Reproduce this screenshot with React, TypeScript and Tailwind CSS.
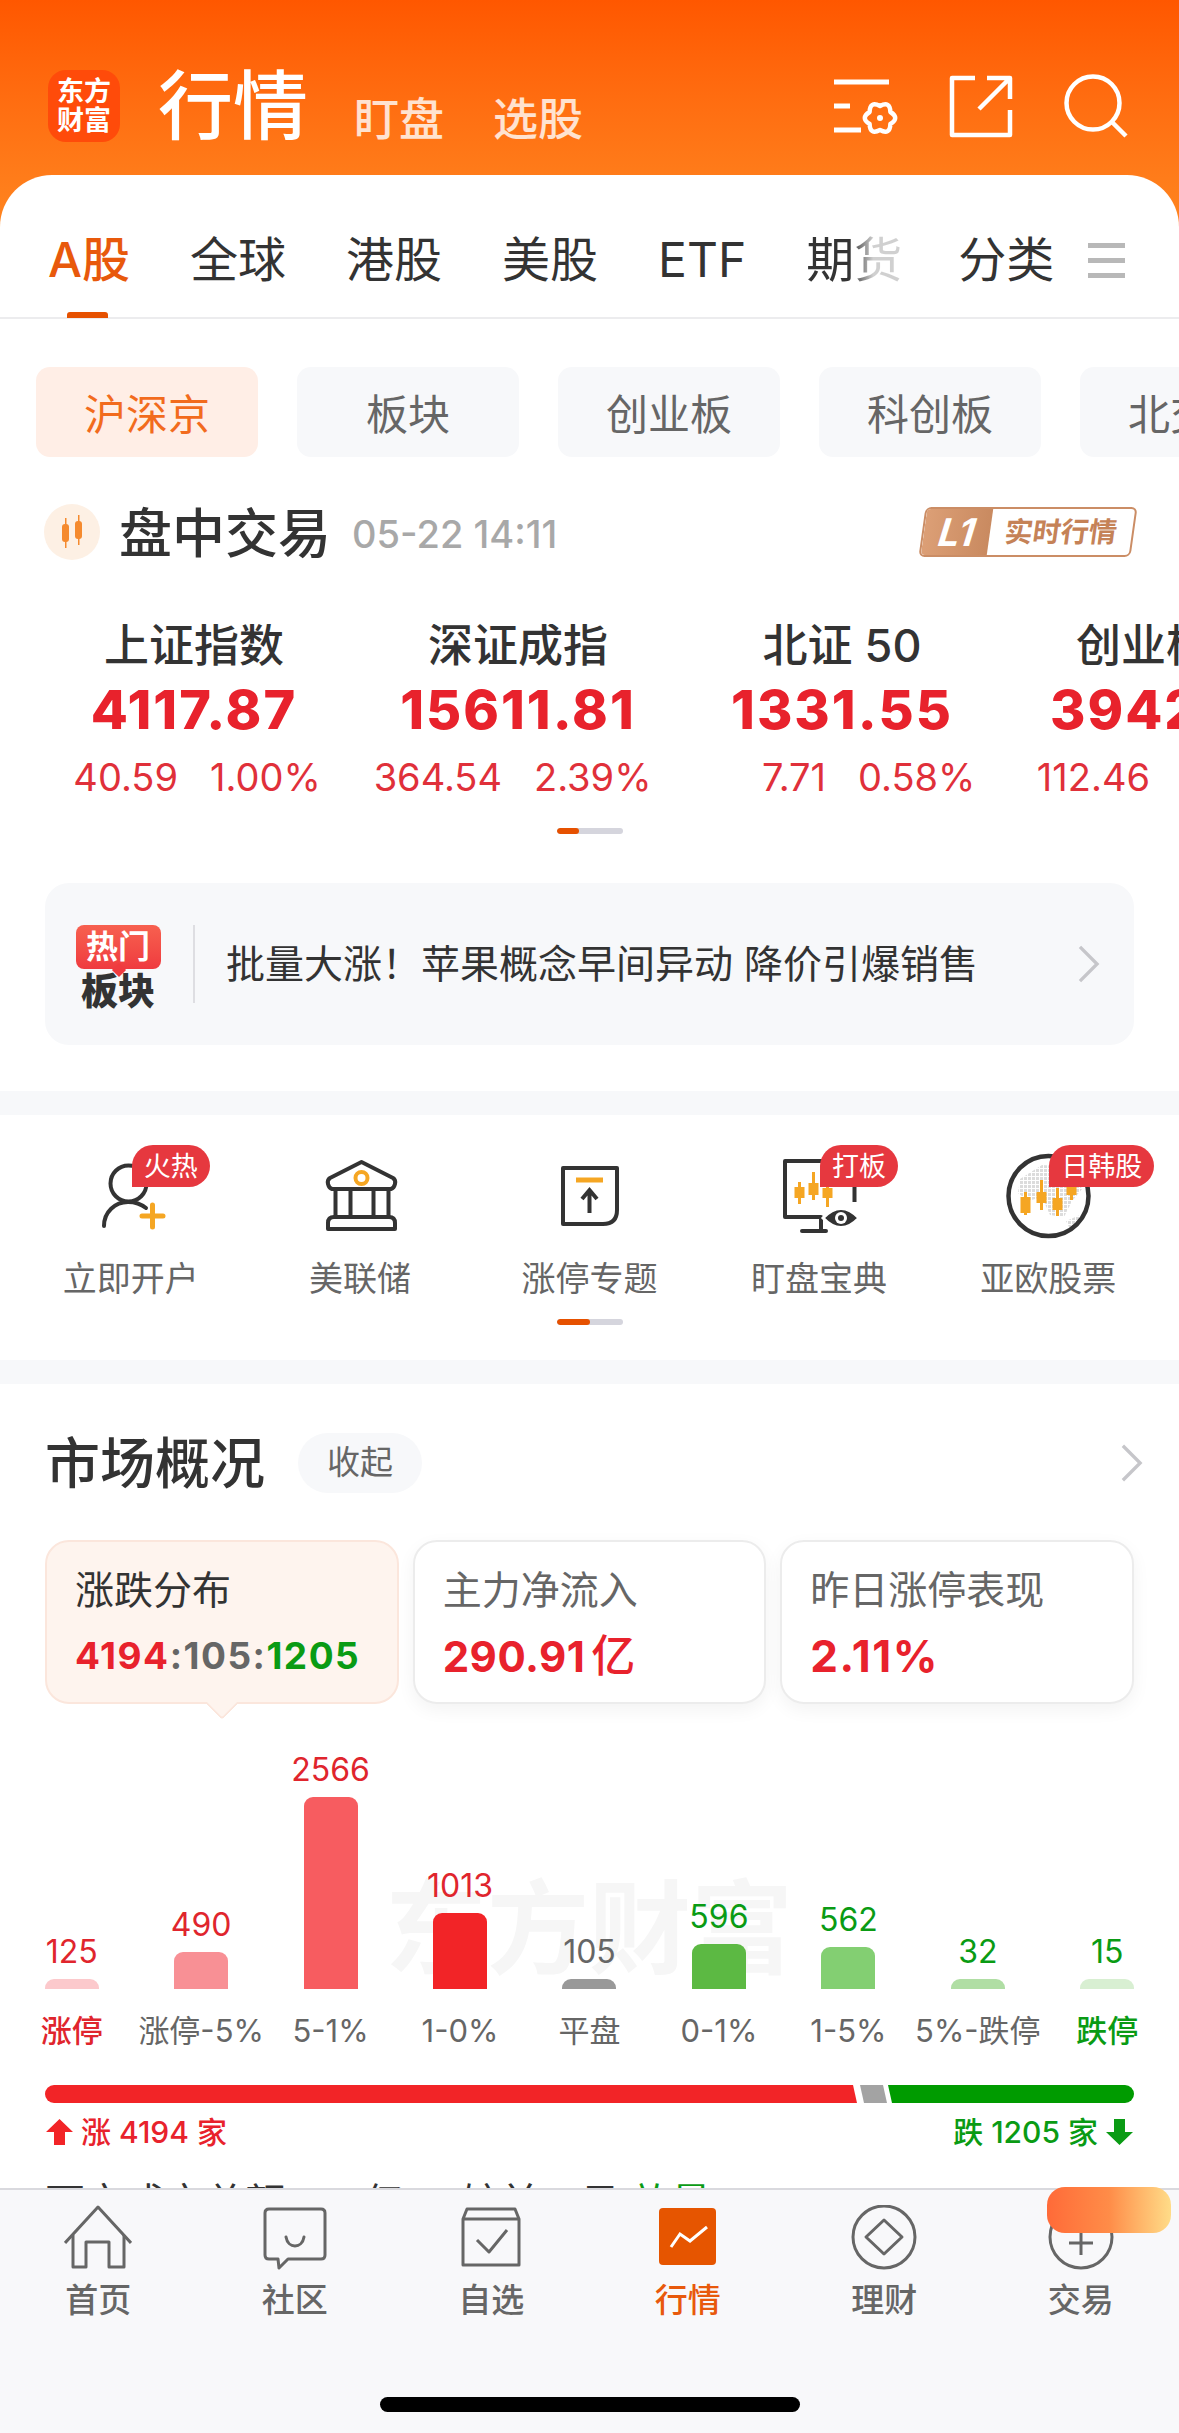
const mainTabs = ["全球", "港股", "美股", "ETF"];
const subTabs = ["板块", "创业板", "科创板", "北交所"];

const indexes = [
  { name: "上证指数", value: "4117.87", change: "40.59", pct: "1.00%" },
  { name: "深证成指", value: "15611.81", change: "364.54", pct: "2.39%" },
  { name: "北证 50", value: "1331.55", change: "7.71", pct: "0.58%" },
  { name: "创业板指", value: "3942.10", change: "112.46", pct: "2.93%" },
];

const summaryCards = [
  { title: "主力净流入", value: "290.91", unit: "亿", size: "text-[42px] tracking-[0.5px]" },
  { title: "昨日涨停表现", value: "2.11%", unit: "", size: "text-[44px] tracking-[1.5px]" },
];

const bars = [
  { value: "125", label: "涨停", h: "h-[10px]", bar: "bg-[#fcc9cc]", text: "text-[#e0252d]", labelText: "text-[#e0252d] font-medium" },
  { value: "490", label: "涨停-5%", h: "h-[37px]", bar: "bg-[#f89095]", text: "text-[#e0252d]", labelText: "text-[#666]" },
  { value: "2566", label: "5-1%", h: "h-[192px]", bar: "bg-[#f75c60]", text: "text-[#e0252d]", labelText: "text-[#666]" },
  { value: "1013", label: "1-0%", h: "h-[76px]", bar: "bg-[#f22427]", text: "text-[#e0252d]", labelText: "text-[#666]" },
  { value: "105", label: "平盘", h: "h-[10px]", bar: "bg-[#999999]", text: "text-[#666]", labelText: "text-[#666]" },
  { value: "596", label: "0-1%", h: "h-[45px]", bar: "bg-[#5cb943]", text: "text-[#0a9b14]", labelText: "text-[#666]" },
  { value: "562", label: "1-5%", h: "h-[42px]", bar: "bg-[#83cf72]", text: "text-[#0a9b14]", labelText: "text-[#666]" },
  { value: "32", label: "5%-跌停", h: "h-[10px]", bar: "bg-[#b0dea4]", text: "text-[#0a9b14]", labelText: "text-[#666]" },
  { value: "15", label: "跌停", h: "h-[10px]", bar: "bg-[#d8efd2]", text: "text-[#0a9b14]", labelText: "text-[#0a9b14] font-medium" },
];

function Chevron({ className }: { className: string }) {
  return (
    <svg className={className} viewBox="0 0 24 40" fill="none" stroke="#c6c6ca" strokeWidth="3.5">
      <path d="M3 2l18 18L3 38" />
    </svg>
  );
}

function Candle({ x, wick, body }: { x: number; wick: [number, number]; body: [number, number] }) {
  return (
    <g fill="#f5a623">
      <rect x={x - 1.5} y={wick[0]} width="3" height={wick[1] - wick[0]} />
      <rect x={x - 5} y={body[0]} width="10" height={body[1] - body[0]} />
    </g>
  );
}

function QuickIcon({ kind }: { kind: string }) {
  const dark = { fill: "none", stroke: "#333", strokeWidth: 4 };
  return (
    <svg className="absolute inset-0" width="200" height="96" viewBox="0 0 200 96">
      {kind === "user" && (
        <g>
          <circle cx="97.5" cy="38.5" r="18" {...dark} />
          <path d="M73 81c0-14 11-24 24-24 7 0 13 2 18 6" {...dark} strokeLinecap="round" />
          <path d="M111 71h21M121.500 60v22" stroke="#f5a623" strokeWidth="5" strokeLinecap="round" />
        </g>
      )}
      {kind === "bank" && (
        <g>
          <path d="M101.500 17L133 33q3 2 2 6t-4 5H72q-3-1-4-5t2-6z" {...dark} strokeLinejoin="round" />
          <circle cx="101.500" cy="33" r="6" fill="none" stroke="#f5a623" strokeWidth="4" />
          <path d="M75.500 45v27M90.500 45v27M113.500 45v27M128.500 45v27" {...dark} />
          <path d="M74 72h55q6 0 6 6v6H68v-6q0-6 6-6z" {...dark} strokeLinejoin="round" />
        </g>
      )}
      {kind === "limit" && (
        <g>
          <path d="M74 23h54v42q0 14-14 14H74z" {...dark} strokeLinejoin="round" />
          <path d="M87 35h27" stroke="#f5a623" strokeWidth="5" />
          <path d="M100.500 68V46M93 54l7.500-9 7.500 9" {...dark} />
        </g>
      )}
      {kind === "screen" && (
        <g>
          <path d="M102 72H66V16h40M135.500 40v17" {...dark} strokeLinejoin="round" />
          <path d="M102 72v14M83 86h24" {...dark} strokeLinecap="round" />
          <Candle x={80.5} wick={[37, 59]} body={[42, 53]} />
          <Candle x={94.5} wick={[27, 55]} body={[38, 50]} />
          <Candle x={108.5} wick={[40, 62]} body={[43, 53]} />
          <Candle x={120.5} wick={[30, 40]} body={[30, 36]} />
          <path d="M104 73q18-19 36 0q-18 19-36 0z" fill="#333" stroke="#fff" strokeWidth="3" />
          <circle cx="122" cy="73" r="6" fill="#fff" />
          <circle cx="122" cy="73" r="3" fill="#333" />
        </g>
      )}
      {kind === "globe" && (
        <g>
          <defs>
            <pattern id="land" width="4" height="4" patternUnits="userSpaceOnUse">
              <rect width="3" height="3" fill="#dcdcdc" />
            </pattern>
          </defs>
          <path d="M72 34l22-14 30 2 10 22-10 12-8 16-14-2-8-18-14 4-10-8z" fill="url(#land)" />
          <path d="M118 76l14-6 2 6-12 8z" fill="url(#land)" />
          <circle cx="100.500" cy="51" r="40" fill="none" stroke="#333" strokeWidth="4.500" />
          <Candle x={77.5} wick={[47, 70]} body={[52, 68]} />
          <Candle x={93.5} wick={[35, 65]} body={[47, 58]} />
          <Candle x={109.5} wick={[43, 71]} body={[53, 65]} />
          <Candle x={123.5} wick={[40, 55]} body={[41, 50]} />
        </g>
      )}
    </svg>
  );
}

const quickItems = [
  { kind: "user", label: "立即开户", badge: "火热", badgeW: "w-[78px]" },
  { kind: "bank", label: "美联储", badge: "", badgeW: "" },
  { kind: "limit", label: "涨停专题", badge: "", badgeW: "" },
  { kind: "screen", label: "盯盘宝典", badge: "打板", badgeW: "w-[78px]" },
  { kind: "globe", label: "亚欧股票", badge: "日韩股", badgeW: "w-[105px]" },
];

function NavIcon({ kind }: { kind: string }) {
  const line = { fill: "none", stroke: "#666", strokeWidth: 3 };
  return (
    <svg width="68" height="68" viewBox="0 0 68 68">
      {kind === "home" && (
        <g {...line} strokeLinejoin="round">
          <path d="M1 38L34 2l33 36" />
          <path d="M9 30v32h13V37h23v25h15V30" />
        </g>
      )}
      {kind === "community" && (
        <g {...line} strokeLinejoin="round">
          <path d="M8 4h52q4 0 4 4v42q0 4-4 4H27l-9 9-1-9H8q-4 0-4-4V8q0-4 4-4z" />
          <path d="M25 32c2 12 16 12 18 0" strokeLinecap="round" />
        </g>
      )}
      {kind === "watch" && (
        <g {...line} strokeLinejoin="round">
          <path d="M6 14l4-10h48l4 10v46H6zM6 14h56" />
          <path d="M20 35l12 12 18-22" />
        </g>
      )}
      {kind === "market" && (
        <g>
          <rect x="5" y="3" width="57" height="57" rx="4" fill="#e65500" />
          <path d="M17 42l9-13 10 7 17-14" fill="none" stroke="#fff" strokeWidth="3" />
        </g>
      )}
      {kind === "wealth" && (
        <g {...line}>
          <circle cx="34" cy="32" r="31" />
          <path d="M34 15l18 17-18 17-18-17z" strokeLinejoin="round" />
        </g>
      )}
      {kind === "trade" && (
        <g {...line}>
          <circle cx="34" cy="32" r="31" />
          <path d="M22 38h24M34 26v24" />
        </g>
      )}
    </svg>
  );
}

const navItems = [
  { kind: "home", label: "首页" },
  { kind: "community", label: "社区" },
  { kind: "watch", label: "自选" },
  { kind: "market", label: "行情" },
  { kind: "wealth", label: "理财" },
  { kind: "trade", label: "交易" },
];

export default function App() {
  return (
    <div className="relative flex h-[2433px] w-[1179px] flex-col overflow-hidden bg-white [font-family:Inter,'Noto_Sans_CJK_SC',sans-serif]">
      <div className="min-h-0 flex-1 overflow-hidden">
        {/* orange header */}
        <header className="h-[227px] bg-gradient-to-b from-[#ff5700] to-[#ff851f] pt-[70px]">
          <div className="flex h-[72px] items-center pl-[48px] pr-[51px]">
            <div className="flex h-[72px] w-[72px] flex-col items-center justify-center rounded-[18px] bg-[#ff4b0a] text-[27px] font-bold leading-[29px] text-white">
              <span>东方</span>
              <span>财富</span>
            </div>
            <h1 className="ml-[38px] text-[75px] font-medium leading-[72px] text-white">行情</h1>
            <div className="ml-[46px] flex translate-y-[2px] gap-[49px] self-end text-[45px] font-medium leading-[48px] text-white/80">
              <span>盯盘</span>
              <span>选股</span>
            </div>
            <div className="ml-auto flex items-center gap-[51px]">
              <svg width="64" height="64" viewBox="0 0 64 64" fill="none" stroke="#fff" strokeWidth="5">
                <path d="M0 8h55M0 32h16M0 56h27" />
                <path d="M46 32Q56 26.700 56.400 38Q66 44 56.400 50Q56 61.300 46 56Q36 61.300 35.600 50Q26 44 35.600 38Q36 26.700 46 32z" strokeWidth="4.500" strokeLinejoin="round" />
                <circle cx="46" cy="44" r="3" fill="#fff" stroke="none" />
              </svg>
              <svg width="64" height="64" viewBox="0 0 64 64" fill="none" stroke="#fff" strokeWidth="4.500" strokeLinejoin="round">
                <path d="M26 4H3v57h58V36" />
                <path d="M38 4h23v21M60 5L30 35" />
              </svg>
              <svg width="64" height="64" viewBox="0 0 64 64" fill="none" stroke="#fff" strokeWidth="4.500">
                <circle cx="29" cy="29" r="26.500" />
                <path d="M47 47l15 15" />
              </svg>
            </div>
          </div>
        </header>

        <main className="relative -mt-[52px] rounded-t-[52px] bg-white">
          {/* market tabs */}
          <nav className="flex h-[144px] items-center gap-[60px] border-b-2 border-[#ececee] pl-[48px] pt-[28px] text-[48px] leading-[56px] text-[#333]">
            <div className="relative font-medium text-[#e8590c]">
              A股
              <span className="absolute left-[19px] top-[80px] h-[6px] w-[41px] rounded-t-[3px] bg-[#e65100]" />
            </div>
            {mainTabs.map((t) => (
              <span key={t}>{t}</span>
            ))}
            <span className="bg-gradient-to-r from-[#333] from-45% to-[#d0d0d0] to-70% bg-clip-text text-transparent">期货</span>
            <span className="-ml-[4px]">分类</span>
            <div className="-ml-[26px] flex w-[37px] flex-col gap-[10px]">
              <span className="h-[5px] bg-[#b8b8b8]" />
              <span className="h-[5px] bg-[#b8b8b8]" />
              <span className="h-[5px] bg-[#b8b8b8]" />
            </div>
          </nav>

          {/* sub tabs */}
          <div className="mt-[48px] flex gap-[39px] overflow-hidden pl-[36px] text-[42px]">
            <div className="flex h-[90px] w-[222px] shrink-0 items-center justify-center rounded-[14px] bg-[#ffeee6] pt-[5px] text-[#f26b1d]">沪深京</div>
            {subTabs.map((t) => (
              <div key={t} className="flex h-[90px] w-[222px] shrink-0 items-center justify-center rounded-[14px] bg-[#f7f8fa] pt-[5px] text-[#666]">
                {t}
              </div>
            ))}
          </div>

          {/* session line */}
          <div className="mt-[47px] flex h-[56px] items-center pl-[44px] pr-[45px]">
            <svg width="56" height="56" viewBox="0 0 56 56">
              <circle cx="28" cy="28" r="28" fill="#fdf0e4" />
              <g fill="#f58a2e">
                <rect x="18" y="20" width="7" height="18" rx="3" />
                <rect x="21" y="14" width="1.500" height="30" />
                <rect x="31" y="17" width="7" height="18" rx="3" />
                <rect x="34" y="11" width="1.500" height="30" />
              </g>
            </svg>
            <span className="ml-[19px] translate-y-[2px] text-[53px] font-medium leading-[56px] text-[#333]">盘中交易</span>
            <span className="ml-[21px] translate-y-[2px] text-[38px] font-medium text-[#a8a8a8]">05-22 14:11</span>
            <div className="ml-auto flex h-[50px] w-[212px] -skew-x-[8deg] overflow-hidden rounded-[6px] border-2 border-[#cb8d65]">
              <span className="flex w-[66px] items-center justify-center bg-gradient-to-r from-[#dc9f76] to-[#c98a60] text-[38px] font-bold italic text-white">L1</span>
              <span className="flex flex-1 items-center justify-center text-[28px] font-bold text-[#c58257]">实时行情</span>
            </div>
          </div>

          {/* index quotes */}
          <div className="mt-[64px] flex overflow-hidden pl-[32px]">
            {indexes.map((o) => (
              <div key={o.name} className="w-[324px] shrink-0 text-center">
                <div className="h-[44px] whitespace-nowrap text-[45px] font-medium leading-[44px] text-[#333]">{o.name}</div>
                <div className="mt-[10px] text-[54px] font-extrabold leading-[64px] tracking-[2px] text-[#e8222c]">{o.value}</div>
                <div className="mt-[14px] grid grid-cols-2 gap-[32px] text-[38px] leading-[42px] text-[#e0303a]">
                  <span className="text-right">{o.change}</span>
                  <span className="text-left">{o.pct}</span>
                </div>
              </div>
            ))}
          </div>
          <div className="mx-auto mt-[30px] h-[6px] w-[66px] overflow-hidden rounded-full bg-[#d5d5dd]">
            <div className="h-full w-[22px] rounded-full bg-[#e65100]" />
          </div>

          {/* hot sector banner */}
          <div className="mx-[45px] mt-[49px] flex h-[162px] items-center rounded-[24px] bg-[#f7f8fa] pl-[30px] pr-[34px]">
            <div className="flex w-[86px] translate-y-[3px] flex-col items-center">
              <div className="relative flex h-[44px] w-[85px] items-center justify-center rounded-[8px] bg-gradient-to-b from-[#f7604f] to-[#ef3a3f] text-[32px] font-bold leading-[44px] text-white">
                热门
                <span className="absolute -bottom-[6px] left-[38px] h-[10px] w-[10px] rotate-45 bg-[#ef3a3f]" />
              </div>
              <div className="mt-[5px] text-[37px] font-black leading-[36px] text-[#333]">板块</div>
            </div>
            <div className="ml-[32px] h-[78px] w-[2px] bg-[#dedee2]" />
            <p className="ml-[31px] whitespace-pre text-[39px] text-[#333]">批量大涨！苹果概念早间异动 降价引爆销售</p>
            <Chevron className="ml-auto h-[38px] w-[23px]" />
          </div>

          <div className="mt-[46px] h-[24px] bg-[#f7f8fa]" />

          {/* quick entries */}
          <div className="grid grid-cols-5 px-[16px] pt-[30px]">
            {quickItems.map((o) => (
              <div key={o.label} className="flex flex-col items-center">
                <div className="relative h-[96px] w-[200px]">
                  <QuickIcon kind={o.kind} />
                  {o.badge && (
                    <span className={`absolute left-[101px] top-0 flex h-[42px] items-center justify-center rounded-t-[21px] rounded-br-[21px] bg-[#e6383f] text-[27px] leading-none text-white ${o.badgeW}`}>
                      {o.badge}
                    </span>
                  )}
                </div>
                <span className="mt-[18px] text-[34px] leading-[40px] text-[#666]">{o.label}</span>
              </div>
            ))}
          </div>
          <div className="mx-auto mt-[20px] h-[6px] w-[66px] overflow-hidden rounded-full bg-[#d5d5dd]">
            <div className="h-full w-[33px] rounded-full bg-[#e65100]" />
          </div>

          <div className="mt-[35px] h-[24px] bg-[#f7f8fa]" />

          {/* market overview */}
          <section>
            <div className="mt-[49px] flex h-[60px] items-center pl-[45px] pr-[36px]">
              <h2 className="text-[55px] font-medium leading-[60px] text-[#333]">市场概况</h2>
              <span className="ml-[33px] flex h-[60px] w-[124px] items-center justify-center rounded-full bg-[#f7f8fa] text-[33px] text-[#666]">收起</span>
              <Chevron className="ml-auto h-[40px] w-[23px]" />
            </div>

            <div className="mt-[47px] grid grid-cols-3 gap-[14px] px-[45px]">
              <div className="relative h-[164px] rounded-[24px] border-2 border-[#fbe6dc] bg-[#fef4ee] pl-[28px] pt-[26px]">
                <div className="text-[39px] leading-[44px] text-[#333]">涨跌分布</div>
                <div className="mt-[20px] whitespace-nowrap text-[37px] font-bold leading-[48px] tracking-[1.5px]">
                  <span className="text-[#e8222c]">4194</span>
                  <span className="text-[#666]">:105:</span>
                  <span className="text-[#0a9b14]">1205</span>
                </div>
                <span className="absolute -bottom-[13px] left-[163px] h-[24px] w-[24px] rotate-45 rounded-br-[4px] border-b-2 border-r-2 border-[#fbe6dc] bg-[#fef4ee]" />
              </div>
              {summaryCards.map((o) => (
                <div key={o.title} className="h-[164px] rounded-[24px] border-2 border-[#ececec] bg-white pl-[28px] pt-[26px] shadow-[0_6px_18px_rgba(0,0,0,0.05)]">
                  <div className="text-[39px] leading-[44px] text-[#666]">{o.title}</div>
                  <div className={`mt-[20px] font-bold leading-[48px] text-[#e8222c] ${o.size}`}>
                    {o.value}
                    {o.unit && <span className="ml-[6px] text-[44px] font-medium">{o.unit}</span>}
                  </div>
                </div>
              ))}
            </div>

            {/* rise and fall chart */}
            <div className="relative mx-[7px] grid h-[285px] grid-cols-9 items-end">
              <div className="absolute left-[378px] top-[170px] whitespace-nowrap text-[102px] font-bold leading-[110px] text-[#f6f6f6]">东方财富</div>
              {bars.map((o) => (
                <div key={o.label} className="relative flex flex-col items-center">
                  <span className={`mb-[9px] text-[32px] leading-[36px] ${o.text}`}>{o.value}</span>
                  <div className={`w-[54px] rounded-t-[9px] ${o.h} ${o.bar}`} />
                </div>
              ))}
            </div>
            <div className="mx-[7px] mt-[22px] grid grid-cols-9">
              {bars.map((o) => (
                <span key={o.label} className={`whitespace-nowrap text-center text-[31px] leading-[40px] ${o.labelText}`}>
                  {o.label}
                </span>
              ))}
            </div>

            <svg className="mx-[45px] mt-[34px] block" width="1089" height="18" viewBox="0 0 1089 18">
              <defs>
                <clipPath id="pill">
                  <rect width="1089" height="18" rx="9" />
                </clipPath>
              </defs>
              <g clipPath="url(#pill)">
                <polygon points="0,0 808,0 812,18 0,18" fill="#f22427" />
                <polygon points="815,0 838,0 842,18 819,18" fill="#a3a3a3" />
                <polygon points="843,0 1089,0 1089,18 847,18" fill="#009b00" />
              </g>
            </svg>

            <div className="mt-[11px] flex h-[36px] items-center justify-between px-[46px] text-[30px] font-medium leading-[36px]">
              <div className="flex items-center gap-[8px] text-[#e8222c]">
                <svg width="27" height="26" viewBox="0 0 27 26" fill="#f22427">
                  <path d="M13.500 0L27 13h-8v13H8V13H0z" />
                </svg>
                <span>涨 4194 家</span>
              </div>
              <div className="flex items-center gap-[8px] text-[#0a9b14]">
                <span>跌 1205 家</span>
                <svg width="27" height="26" viewBox="0 0 27 26" fill="#0a9b14">
                  <path d="M13.500 26L27 13h-8V0H8v13H0z" />
                </svg>
              </div>
            </div>

            <p className="ml-[45px] mt-[29px] whitespace-pre text-[40px] leading-[48px] text-[#333]">
              两市成交总额       亿     较前一日 <span className="text-[#0a9b14]">放量</span>
            </p>
          </section>
        </main>
      </div>

      {/* bottom navigation */}
      <footer className="h-[245px] shrink-0 border-t-2 border-[#d9d9de] bg-[#f8f8fa]">
        <div className="grid grid-cols-6 pt-[15px]">
          {navItems.map((o) => (
            <div key={o.label} className="flex flex-col items-center">
              <NavIcon kind={o.kind} />
              <span className={`mt-[5px] text-[33px] font-medium leading-[44px] ${o.kind === "market" ? "text-[#e8590c]" : "text-[#666]"}`}>
                {o.label}
              </span>
            </div>
          ))}
        </div>
        <div className="mx-auto mt-[75px] h-[15px] w-[420px] rounded-full bg-black" />
      </footer>

      <div className="absolute left-[1047px] top-[2187px] h-[46px] w-[124px] rounded-[18px] bg-gradient-to-r from-[#ff6a38] via-[#ff8c48] to-[#ffdc88]" />
    </div>
  );
}
